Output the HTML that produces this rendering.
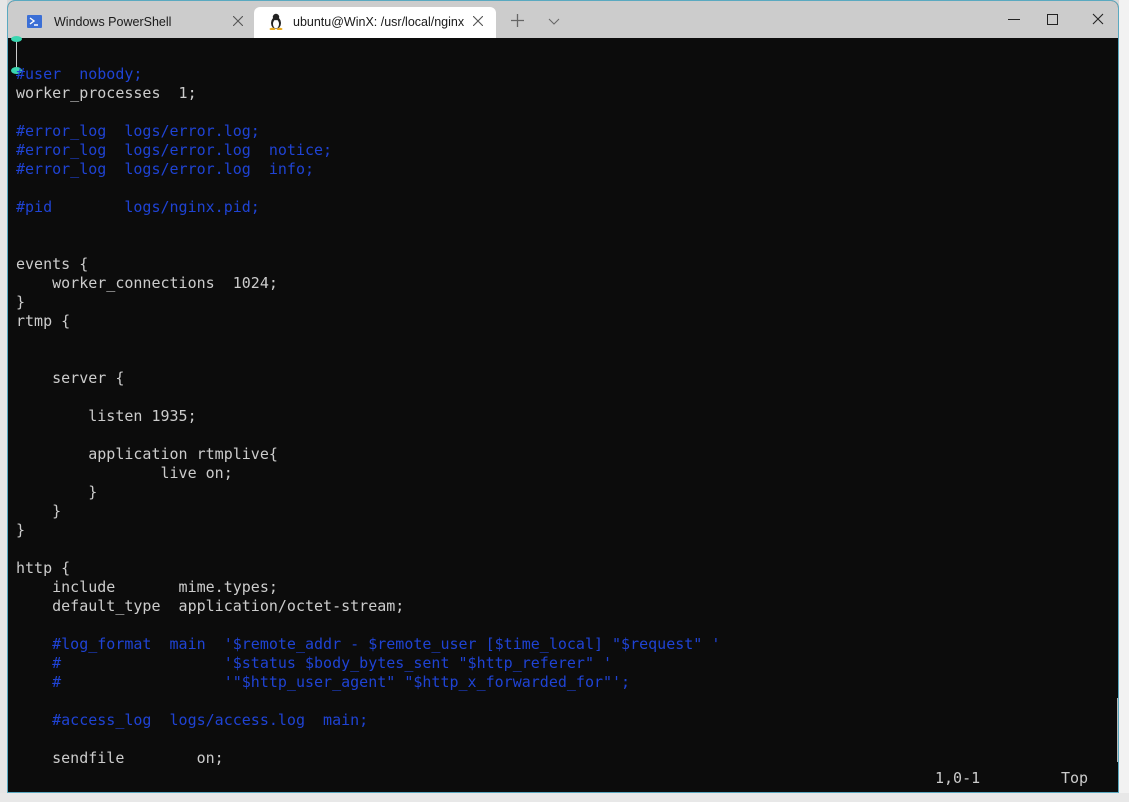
<!DOCTYPE html>
<html><head><meta charset="utf-8"><style>
body{margin:0;width:1129px;height:802px;overflow:hidden;background:#d8d8d8;position:relative;font-family:"Liberation Sans",sans-serif}
.win{position:absolute;left:7px;top:0;width:1112px;height:793px;background:#0c0c0c;border:1px solid #5aa9c0;border-radius:8px 8px 0 0;box-sizing:border-box;overflow:hidden}
.bar{position:absolute;left:0;top:0;right:0;height:37px;background:#cccccc}
.ab{position:absolute;font-size:12.5px;color:#1a1a1a}
pre{position:absolute;left:8px;top:45px;margin:0;font-family:"DejaVu Sans Mono","Liberation Mono",monospace;font-size:15px;line-height:19px;color:#cccccc}
.c{color:#1f43d4}
.st{position:absolute;top:768px;font-family:"DejaVu Sans Mono",monospace;font-size:15px;color:#cccccc}
</style></head><body>
<div style="position:absolute;left:0;top:0;width:7px;height:802px;background:#e6e6e6"></div>
<div style="position:absolute;left:1119px;top:0;width:10px;height:802px;background:#f2f2f2"></div>
<div style="position:absolute;left:0;top:793px;width:1129px;height:9px;background:#e8e8e8"></div>
<div class="win">
<div class="bar">
<svg style="position:absolute;left:19px;top:14px" width="15" height="13"><rect width="15" height="13" rx="1" fill="#3b6fd6"/><path d="M3 3l4 3-4 3M7 10h4" stroke="#fff" stroke-width="1.4" fill="none"/></svg>
<span class="ab" style="left:46px;top:14px">Windows PowerShell</span>
<svg style="position:absolute;left:225px;top:15px" width="10" height="10"><path d="M0 0l10 10M10 0L0 10" stroke="#555" stroke-width="1.1"/></svg>
<div style="position:absolute;left:246px;top:6px;width:242px;height:31px;background:#fff;border-radius:6px 6px 0 0"></div>
<svg style="position:absolute;left:261px;top:12px" width="14" height="17"><ellipse cx="7" cy="10" rx="5" ry="6" fill="#222"/><ellipse cx="7" cy="11" rx="3" ry="4.5" fill="#fff"/><circle cx="7" cy="4" r="3.2" fill="#222"/><ellipse cx="3.5" cy="16" rx="3" ry="1.3" fill="#e9a81c"/><ellipse cx="10.5" cy="16" rx="3" ry="1.3" fill="#e9a81c"/></svg>
<span class="ab" style="left:285px;top:14px">ubuntu@WinX: /usr/local/nginx</span>
<svg style="position:absolute;left:465px;top:15px" width="10" height="10"><path d="M0 0l10 10M10 0L0 10" stroke="#555" stroke-width="1.1"/></svg>
<svg style="position:absolute;left:503px;top:13px" width="13" height="13"><path d="M6.5 0v13M0 6.5h13" stroke="#666" stroke-width="1.3"/></svg>
<svg style="position:absolute;left:540px;top:17px" width="12" height="8"><path d="M1 1l5 5 5-5" stroke="#666" fill="none"/></svg>
<div style="position:absolute;left:1000px;top:18px;width:12px;height:1px;background:#222"></div>
<div style="position:absolute;left:1039px;top:13px;width:9px;height:9px;border:1px solid #222"></div>
<svg style="position:absolute;left:1084px;top:12px" width="12" height="12"><path d="M1 1l10 10M11 1L1 11" stroke="#222" stroke-width="1.1"/></svg>
</div>
<div style="position:absolute;left:8px;top:37px;width:1px;height:33px;background:#ccc"></div>
<div style="position:absolute;left:3px;top:35px;width:11px;height:6px;border-radius:50%;background:#3ad6b0"></div>
<div style="position:absolute;left:3px;top:66px;width:11px;height:7px;border-radius:50%;background:#3ad6b0"></div>
<div style="position:absolute;left:1109px;top:697px;width:2px;height:64px;background:#bbb"></div>
<pre>&nbsp;
<span class="c">#user  nobody;</span>
worker_processes  1;

<span class="c">#error_log  logs/error.log;
#error_log  logs/error.log  notice;
#error_log  logs/error.log  info;</span>

<span class="c">#pid        logs/nginx.pid;</span>


events {
    worker_connections  1024;
}
rtmp {


    server {

        listen 1935;

        application rtmplive{
                live on;
        }
    }
}

http {
    include       mime.types;
    default_type  application/octet-stream;

<span class="c">    #log_format  main  '$remote_addr - $remote_user [$time_local] "$request" '
    #                  '$status $body_bytes_sent "$http_referer" '
    #                  '"$http_user_agent" "$http_x_forwarded_for"';</span>

<span class="c">    #access_log  logs/access.log  main;</span>

    sendfile        on;
</pre>
<div class="st" style="left:927px">1,0-1</div>
<div class="st" style="left:1053px">Top</div>
</div>
</body></html>
